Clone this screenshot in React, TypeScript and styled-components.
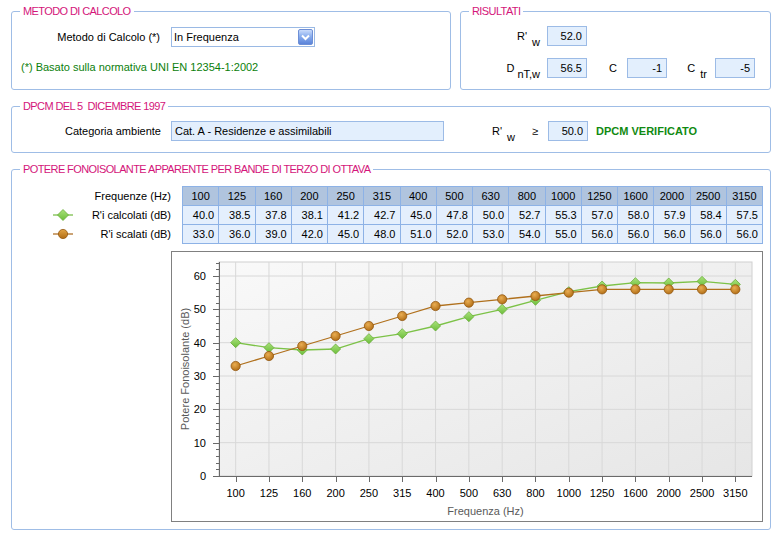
import styled, { createGlobalStyle } from "styled-components"

const freqs = [100, 125, 160, 200, 250, 315, 400, 500, 630, 800, 1000, 1250, 1600, 2000, 2500, 3150]
const calc = [40.0, 38.5, 37.8, 38.1, 41.2, 42.7, 45.0, 47.8, 50.0, 52.7, 55.3, 57.0, 58.0, 57.9, 58.4, 57.5]
const scaled = [33.0, 36.0, 39.0, 42.0, 45.0, 48.0, 51.0, 52.0, 53.0, 54.0, 55.0, 56.0, 56.0, 56.0, 56.0, 56.0]

// chart geometry (svg coords, inside the 1px border)
const W = 590
const H = 269
const PL = 47
const PR = 580
const PT = 10
const PB = 224
const step = (PR - PL) / 16
const xAt = (i: number) => PL + (i + 0.5) * step
const yAt = (v: number) => PB - v * (200 / 60)

const GlobalStyle = createGlobalStyle`
    body {
        margin: 0;
        background: #ffffff;
        font-family: "Liberation Sans", Arial, sans-serif;
        font-size: 11px;
        color: #000000;
    }
`

const Page = styled.div`
    display: flex;
    flex-direction: column;
    gap: 10px;
    padding: 5px 10px 0 11px;
`

const TopRow = styled.div`
    display: flex;
    gap: 9px;
`

const Group = styled.fieldset<{ $width?: number }>`
    box-sizing: border-box;
    margin: 0;
    padding: 0;
    min-width: 0;
    border: 1px solid #9fbde6;
    border-radius: 3px;
    ${p => p.$width ? `width: ${p.$width}px; flex: none;` : `flex: 1;`}
`

const Title = styled.legend`
    margin-left: 8px;
    padding: 0 3px;
    color: #d4157a;
    font-size: 11px;
    line-height: 13px;
    letter-spacing: -0.6px;
    white-space: pre;
`

const MethodBody = styled.div`
    display: flex;
    flex-direction: column;
    gap: 14px;
    padding: 9px 0 0 9px;
`

const Row = styled.div<{ $gap?: number }>`
    display: flex;
    align-items: center;
    gap: ${p => p.$gap ?? 0}px;
`

const Label = styled.span<{ $w: number; $pad?: number }>`
    flex: none;
    width: ${p => p.$w}px;
    padding-right: ${p => p.$pad ?? 0}px;
    box-sizing: border-box;
    text-align: right;
    white-space: nowrap;
`

const Sub = styled.span<{ $gap?: number }>`
    margin-left: ${p => p.$gap ?? 3}px;
    vertical-align: -6px;
    line-height: 0;
`

const SelectBox = styled.div`
    box-sizing: border-box;
    width: 144px;
    height: 20px;
    border: 1px solid #9ab9e4;
    background: #ffffff;
    display: flex;
    align-items: center;
    justify-content: space-between;
    padding: 0 1px 0 2px;
`

const DropButton = styled.div`
    width: 15px;
    height: 16px;
    border-radius: 2px;
    border: 1px solid #6e8fd6;
    box-sizing: border-box;
    background: linear-gradient(#c9dbfb, #8aaeee 45%, #5b83d9);
    display: flex;
    align-items: center;
    justify-content: center;
`

const Note = styled.div`
    color: #0b800b;
    line-height: 13px;
`

const ValueBox = styled.div<{ $w?: number; $align?: string }>`
    flex: none;
    box-sizing: border-box;
    width: ${p => p.$w ?? 40}px;
    height: 20px;
    line-height: 18px;
    border: 1px solid #9cbbe6;
    background: #e3effd;
    text-align: ${p => p.$align ?? "right"};
    padding: 0 4px 0 3px;
    white-space: nowrap;
`

const ResultsBody = styled.div`
    display: flex;
    flex-direction: column;
    gap: 12px;
    padding: 8px 0 11px 0;
`

const DpcmBody = styled.div`
    display: flex;
    align-items: center;
    padding: 8px 0 11px 9px;
`

const Gte = styled.span`
    margin: 0 10px 0 17px;
`

const Verified = styled.span`
    margin-left: 8px;
    color: #118a11;
    font-weight: bold;
`

const BandsBody = styled.div`
    display: flex;
    flex-direction: column;
    gap: 7px;
    padding: 10px 6px 7px 0;
`

const Table = styled.table`
    width: 751px;
    table-layout: fixed;
    border-collapse: collapse;
`

const RowHead = styled.th`
    width: 159px;
    padding: 0 11px 0 0;
    font-weight: normal;
    text-align: right;
    white-space: nowrap;
    height: 18px;
`

const LegendRow = styled.div`
    display: flex;
    align-items: center;
    justify-content: space-between;
    padding-left: 41px;
`

const Cell = styled.td<{ $head?: boolean }>`
    height: 18px;
    padding: 0 4px 0 0;
    border: 1px solid #8db2e6;
    background: ${p => p.$head ? "#b0c4de" : "#e4effd"};
    text-align: ${p => p.$head ? "center" : "right"};
    ${p => p.$head ? "padding: 0;" : ""}
    white-space: nowrap;
`

const ChartBox = styled.div`
    margin-left: 159px;
    width: 592px;
    height: 271px;
    box-sizing: border-box;
    border: 1px solid #808080;
    background: #ffffff;

    svg {
        display: block;
        font-family: "Liberation Sans", Arial, sans-serif;
        font-size: 11px;
    }
`

const Diamond = ({ x, y, r = 5 }: { x: number; y: number; r?: number }) => (
    <polygon
        points={`${x},${y - r} ${x + r},${y} ${x},${y + r} ${x - r},${y}`}
        fill="url(#gDiamond)"
        stroke="#69ad3a"
        strokeWidth={0.8}
    />
)

const Dot = ({ x, y, r = 4.6 }: { x: number; y: number; r?: number }) => (
    <circle cx={x} cy={y} r={r} fill="url(#gDot)" stroke="#93570f" strokeWidth={0.8} />
)

const LegendIcon = ({ kind }: { kind: "diamond" | "dot" }) => (
    <svg width="20" height="12" viewBox="0 0 20 12">
        <defs>
            <linearGradient id={`li-${kind}`} x1="0" y1="0" x2="0" y2="1">
                <stop offset="0" stopColor={kind === "diamond" ? "#a9e27a" : "#e2a445"} />
                <stop offset="1" stopColor={kind === "diamond" ? "#6cbd3b" : "#b06c14"} />
            </linearGradient>
        </defs>
        <line x1="0" y1="6" x2="20" y2="6" stroke={kind === "diamond" ? "#72b93f" : "#a8661a"} strokeWidth="1.2" />
        {kind === "diamond"
            ? <polygon points="10,0.5 15.5,6 10,11.5 4.5,6" fill={`url(#li-${kind})`} stroke="#69ad3a" strokeWidth="0.8" />
            : <circle cx="10" cy="6" r="4.6" fill={`url(#li-${kind})`} stroke="#93570f" strokeWidth="0.8" />}
    </svg>
)

const Chart = () => {
    const minor: number[] = []
    for (let v = 2; v <= 64; v += 2) if (v % 10 !== 0) minor.push(v)
    const major = [0, 10, 20, 30, 40, 50, 60]
    const calcPts = calc.map((v, i) => `${xAt(i)},${yAt(v)}`).join(" ")
    const scaledPts = scaled.map((v, i) => `${xAt(i)},${yAt(v)}`).join(" ")

    return (
        <svg width={W} height={H} viewBox={`0 0 ${W} ${H}`}>
            <defs>
                <linearGradient id="gPlot" x1="0" y1="0" x2="1" y2="1">
                    <stop offset="0" stopColor="#f9f9f9" />
                    <stop offset="1" stopColor="#e6e6e6" />
                </linearGradient>
                <linearGradient id="gDiamond" x1="0" y1="0" x2="0" y2="1">
                    <stop offset="0" stopColor="#a9e27a" />
                    <stop offset="1" stopColor="#6cbd3b" />
                </linearGradient>
                <radialGradient id="gDot" cx="0.4" cy="0.35" r="0.7">
                    <stop offset="0" stopColor="#e9ad52" />
                    <stop offset="1" stopColor="#b06c14" />
                </radialGradient>
            </defs>

            <rect x={PL} y={PT} width={PR - PL} height={PB - PT} fill="url(#gPlot)" stroke="#d0d0d0" />

            {freqs.map((_, i) => (
                <line key={`vg${i}`} x1={xAt(i)} y1={PT} x2={xAt(i)} y2={PB} stroke="#d8d8d8" />
            ))}
            {major.slice(1).map(v => (
                <line key={`hg${v}`} x1={PL} y1={yAt(v)} x2={PR} y2={yAt(v)} stroke="#d8d8d8" />
            ))}

            <line x1={PL + 0.5} y1={PT} x2={PL + 0.5} y2={PB} stroke="#6a6a6a" />
            <line x1={PL} y1={PB + 0.5} x2={PR} y2={PB + 0.5} stroke="#6a6a6a" />
            {minor.map(v => (
                <line key={`mt${v}`} x1={PL - 3} y1={Math.round(yAt(v)) + 0.5} x2={PL} y2={Math.round(yAt(v)) + 0.5} stroke="#6a6a6a" />
            ))}
            {major.map(v => (
                <line key={`Mt${v}`} x1={PL - 6} y1={Math.round(yAt(v)) + 0.5} x2={PL} y2={Math.round(yAt(v)) + 0.5} stroke="#6a6a6a" />
            ))}
            {freqs.map((_, i) => (
                <line key={`xt${i}`} x1={Math.round(xAt(i)) + 0.5} y1={PB} x2={Math.round(xAt(i)) + 0.5} y2={PB + 6} stroke="#6a6a6a" />
            ))}

            {major.map(v => (
                <text key={`yl${v}`} x={34} y={yAt(v) + 4} textAnchor="end" fill="#000">{v}</text>
            ))}
            {freqs.map((f, i) => (
                <text key={`xl${i}`} x={xAt(i)} y={245} textAnchor="middle" fill="#000">{f}</text>
            ))}

            <text x={(PL + PR) / 2} y={263} textAnchor="middle" fill="#5a5a5a">Frequenza (Hz)</text>
            <text x={17} y={(PT + PB) / 2} textAnchor="middle" fill="#5a5a5a" transform={`rotate(-90 17 ${(PT + PB) / 2})`}>
                Potere Fonoisolante (dB)
            </text>

            <polyline points={calcPts} fill="none" stroke="#7cc247" strokeWidth={1.3} />
            {calc.map((v, i) => <Diamond key={`d${i}`} x={xAt(i)} y={yAt(v)} />)}

            <polyline points={scaledPts} fill="none" stroke="#b0701c" strokeWidth={1.3} />
            {scaled.map((v, i) => <Dot key={`c${i}`} x={xAt(i)} y={yAt(v)} />)}
        </svg>
    )
}

export default function App() {
    return (
        <>
            <GlobalStyle />
            <Page>
                <TopRow>
                    <Group $width={440}>
                        <Title>METODO DI CALCOLO</Title>
                        <MethodBody>
                            <Row $gap={11}>
                                <Label $w={139}>Metodo di Calcolo (*)</Label>
                                <SelectBox>
                                    <span>In Frequenza</span>
                                    <DropButton>
                                        <svg width="9" height="7" viewBox="0 0 9 7">
                                            <polyline points="1,1.5 4.5,5 8,1.5" fill="none" stroke="#ffffff" strokeWidth="2" />
                                        </svg>
                                    </DropButton>
                                </SelectBox>
                            </Row>
                            <Note>(*) Basato sulla normativa UNI EN 12354-1:2002</Note>
                        </MethodBody>
                    </Group>

                    <Group>
                        <Title>RISULTATI</Title>
                        <ResultsBody>
                            <Row>
                                <Label $w={86} $pad={7}>R'<Sub $gap={5}>w</Sub></Label>
                                <ValueBox>52.0</ValueBox>
                            </Row>
                            <Row>
                                <Label $w={86} $pad={7}>D<Sub $gap={3}>nT,w</Sub></Label>
                                <ValueBox>56.5</ValueBox>
                                <Label $w={40} $pad={10}>C</Label>
                                <ValueBox>-1</ValueBox>
                                <Label $w={48} $pad={8}>C<Sub $gap={5}>tr</Sub></Label>
                                <ValueBox>-5</ValueBox>
                            </Row>
                        </ResultsBody>
                    </Group>
                </TopRow>

                <Group>
                    <Title>{"DPCM DEL 5  DICEMBRE 1997"}</Title>
                    <DpcmBody>
                        <Label $w={150} $pad={10}>Categoria ambiente</Label>
                        <ValueBox $w={273} $align="left">Cat. A - Residenze e assimilabili</ValueBox>
                        <Label $w={71} $pad={0}>R'<Sub $gap={5}>w</Sub></Label>
                        <Gte>≥</Gte>
                        <ValueBox>50.0</ValueBox>
                        <Verified>DPCM VERIFICATO</Verified>
                    </DpcmBody>
                </Group>

                <Group>
                    <Title>POTERE FONOISOLANTE APPARENTE PER BANDE DI TERZO DI OTTAVA</Title>
                    <BandsBody>
                        <Table>
                            <tbody>
                                <tr>
                                    <RowHead>Frequenze (Hz)</RowHead>
                                    {freqs.map(f => <Cell key={f} $head>{f}</Cell>)}
                                </tr>
                                <tr>
                                    <RowHead>
                                        <LegendRow><LegendIcon kind="diamond" /><span>R'i calcolati (dB)</span></LegendRow>
                                    </RowHead>
                                    {calc.map((v, i) => <Cell key={i}>{v.toFixed(1)}</Cell>)}
                                </tr>
                                <tr>
                                    <RowHead>
                                        <LegendRow><LegendIcon kind="dot" /><span>R'i scalati (dB)</span></LegendRow>
                                    </RowHead>
                                    {scaled.map((v, i) => <Cell key={i}>{v.toFixed(1)}</Cell>)}
                                </tr>
                            </tbody>
                        </Table>
                        <ChartBox>
                            <Chart />
                        </ChartBox>
                    </BandsBody>
                </Group>
            </Page>
        </>
    )
}
